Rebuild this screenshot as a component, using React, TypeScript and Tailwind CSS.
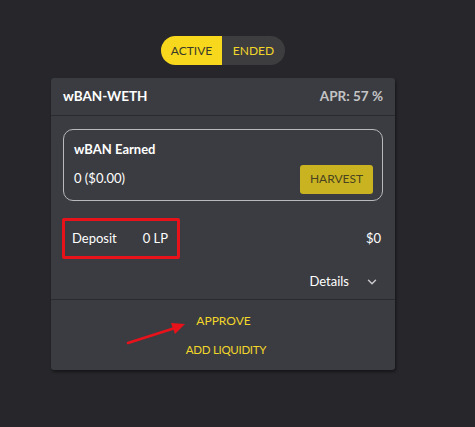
import { ChevronDown } from "lucide-react"

export default function App() {
  return (
    <div
      className="w-[475px] h-[427px] bg-[#27272b] pt-[36px]"
      style={{ fontFamily: "Lato, 'Open Sans', sans-serif" }}
    >
      <div className="ml-[51px] w-[344px]">
        <div className="flex justify-center">
          <div className="flex h-[29px] rounded-full bg-[#3d3d3f] overflow-hidden text-[12px]">
            <button className="w-[61px] bg-[#f7d81c] text-[#3a3a2a]">ACTIVE</button>
            <button className="w-[63px] text-[#f2d62a]">ENDED</button>
          </div>
        </div>

        <div className="mt-[13px] rounded-[3px] bg-[#3b3c41] shadow-[1px_2px_3px_rgba(0,0,0,0.45)]">
          <div className="flex items-center justify-between h-[38px] px-[12px] border-b border-[#2a2b2f]">
            <span className="text-white font-bold text-[13.5px]">wBAN-WETH</span>
            <span className="text-[#c4c4c6] font-bold text-[13.5px]">APR: 57 %</span>
          </div>

          <div className="px-[12px] pt-[13px]">
            <div className="rounded-[10px] border border-[#b9b9bb] h-[72px] pl-[10px] pr-[9px] pt-[10px]">
              <div className="text-white font-bold text-[13px]">wBAN Earned</div>
              <div className="flex items-center justify-between mt-[5px]">
                <span className="text-white text-[13px]">0 ($0.00)</span>
                <button className="w-[73px] h-[29px] rounded-[3px] bg-[#c9b320] text-[#4a4320] text-[12px]">
                  HARVEST
                </button>
              </div>
            </div>
          </div>

          <div className="flex items-center justify-between pl-[11px] pr-[14px] mt-[17px]">
            <div className="flex items-center h-[41px] w-[118px] border-[3px] border-[#e8121a] rounded-[2px] pl-[7px] text-white text-[13px]">
              <span>Deposit</span>
              <span className="ml-[26px]">0 LP</span>
            </div>
            <span className="text-white text-[13px]">$0</span>
          </div>

          <div className="flex items-center justify-end pr-[16px] h-[40px] pt-[6px]">
            <span className="text-white text-[13px]">Details</span>
            <ChevronDown className="ml-[16px] w-[14px] h-[14px] text-[#c8c8ca]" strokeWidth={2.5} />
          </div>

          <div className="border-t border-[#2a2b2f] relative flex flex-col items-center pt-[12px] pb-[12px] gap-[12px] text-[#f2d62a] text-[12px]">
            <span className="h-[17px] leading-[17px] ml-[1px]">APPROVE</span>
            <span className="h-[17px] leading-[17px] ml-[6px] tracking-[-0.3px] text-[11.5px]">ADD LIQUIDITY</span>
            <svg
              className="absolute left-[74px] top-[20px]"
              width="62"
              height="26"
              viewBox="0 0 62 26"
            >
              <line x1="3" y1="23" x2="50" y2="8" stroke="#e8121a" strokeWidth="2.5" strokeLinecap="round" />
              <polygon points="60,4 46,3 50,14" fill="#e8121a" />
            </svg>
          </div>
        </div>
      </div>
    </div>
  )
}
